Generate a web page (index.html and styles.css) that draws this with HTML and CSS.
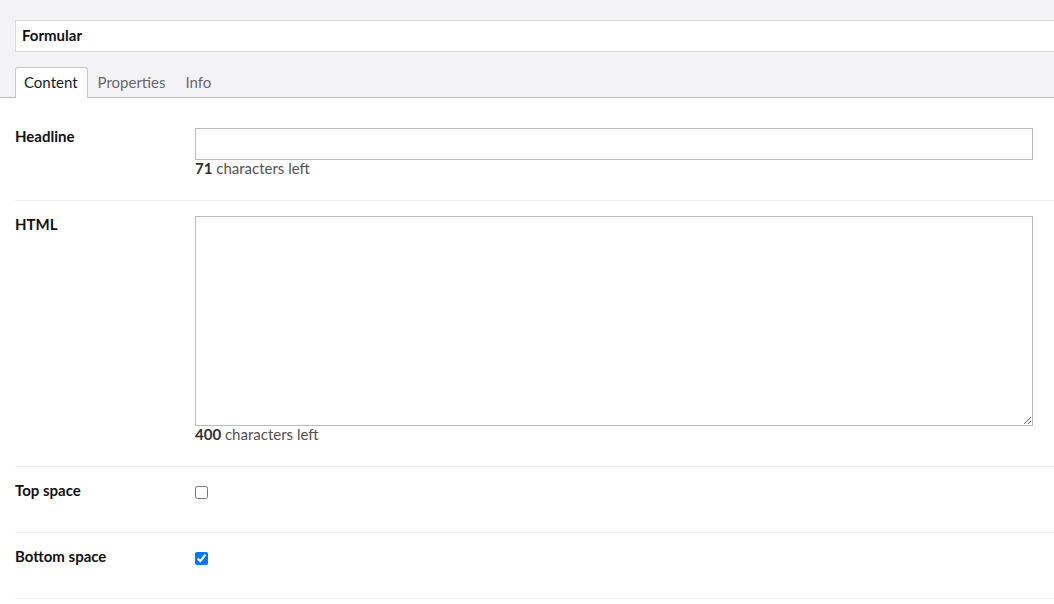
FILE: index.html
```html
<!DOCTYPE html>
<html>
<head>
<meta charset="utf-8">
<link rel="stylesheet" href="styles.css">
</head>
<body>
<div class="header">
  <div class="name-box"><input class="name-input" type="text" value="Formular"></div>
  <div class="tabs">
    <div class="tab active">Content</div>
    <div class="tab">Properties</div>
    <div class="tab">Info</div>
  </div>
</div>
<div class="content">
  <div class="row">
    <div class="label">Headline</div>
    <div class="control">
      <input class="text-input" type="text">
      <div class="help"><b>71</b> characters left</div>
    </div>
  </div>
  <div class="row">
    <div class="label">HTML</div>
    <div class="control">
      <textarea class="text-area"></textarea>
      <div class="help"><b>400</b> characters left</div>
    </div>
  </div>
  <div class="row">
    <div class="label">Top space</div>
    <div class="control"><input class="check" type="checkbox"></div>
  </div>
  <div class="row">
    <div class="label">Bottom space</div>
    <div class="control"><input class="check" type="checkbox" checked></div>
  </div>
</div>
</body>
</html>
```
FILE: styles.css
```css
* { box-sizing: border-box; }
html, body {
  margin: 0;
  padding: 0;
  background: #ffffff;
  font-family: Lato, "Noto Sans", sans-serif;
  color: #1b1b1f;
  overflow: hidden;
}
.header {
  background: #f3f3f5;
  padding: 20px 0 0 15px;
  border-bottom: 1px solid #bbbabf;
}
.name-box {
  margin-right: -20px;
}
.name-input {
  display: block;
  width: 100%;
  height: 32px;
  margin: 0;
  border: 1px solid #d8d7d9;
  background: #fff;
  padding: 0 6px 3px;
  font-family: Lato, "Noto Sans", sans-serif;
  font-size: 15px;
  font-weight: 700;
  color: #111114;
  outline: none;
}
.tabs {
  display: flex;
  margin-top: 15px;
  margin-bottom: -1px;
}
.tab {
  height: 31px;
  line-height: 28px;
  padding: 0 9px 0 8px;
  margin-right: 1px;
  font-size: 15px;
  color: #68676b;
  border: 1px solid transparent;
  border-bottom: none;
  border-radius: 3px 3px 0 0;
}
.tab.active {
  background: #fff;
  border-color: #c8c7cc;
  color: #1b1b1f;
}
.content {
  padding: 15px 0 0 15px;
}
.row {
  display: flex;
  padding: 15px 0 24px;
  border-bottom: 1px solid #efeff1;
  margin-right: -10px;
}
.label {
  width: 180px;
  flex: none;
  min-height: 26px;
  font-size: 15px;
  font-weight: 700;
  line-height: 16px;
  color: #111114;
}
.control {
  flex: none;
  width: 838px;
}
.text-input {
  display: block;
  width: 838px;
  height: 32px;
  margin: 0;
  border: 1px solid #bcbcbc;
  background: #fff;
  outline: none;
}
.text-area {
  display: block;
  width: 838px;
  height: 210px;
  margin: 0;
  border: 1px solid #bcbcbc;
  background: #fff;
  outline: none;
  resize: vertical;
}
.help {
  font-size: 15px;
  line-height: 16px;
  color: #515054;
}
.help b { color: #303033; }
.check {
  display: block;
  width: 13px;
  height: 13px;
  margin: 4px 0 0 0;
}
```
